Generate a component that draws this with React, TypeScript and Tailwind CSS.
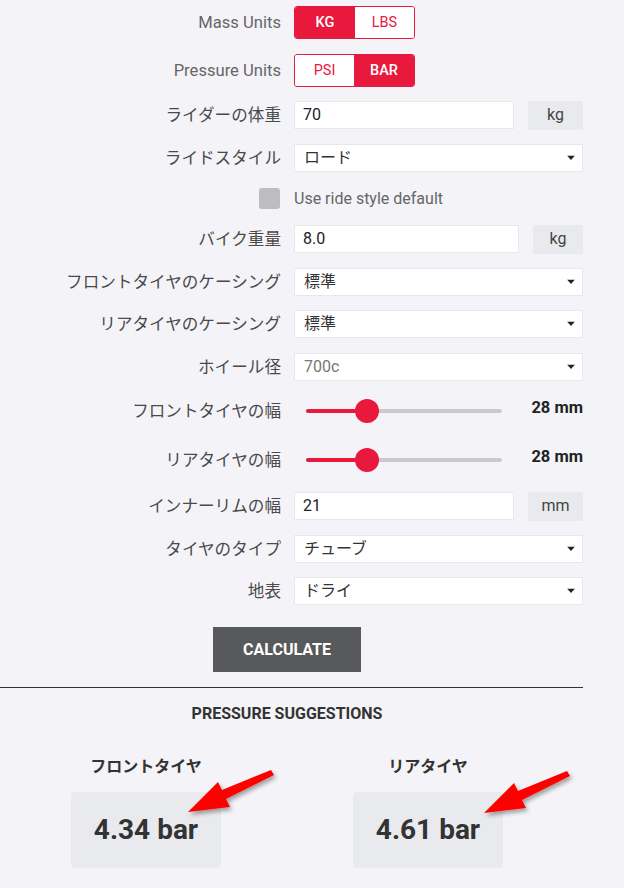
import React from "react";

const Caret = () => (
  <svg width="8" height="5" viewBox="0 0 8 5" className="absolute right-[7px] top-1/2 -translate-y-1/2">
    <path d="M0 0 L8 0 L4 4.5 Z" fill="#222" />
  </svg>
);

function Label({ children }: { children: React.ReactNode }) {
  return <div className="w-[281px] shrink-0 text-right text-[16.6px] text-[#4a4a4a] leading-none pt-[2px]">{children}</div>;
}

function Select({ value, muted }: { value: string; muted?: boolean }) {
  return (
    <div className="relative ml-[13px] w-[289px] h-full bg-white border border-[#e8e8ec] flex items-center pl-[9px]">
      <span className={muted ? "text-[16px] text-[#777]" : "text-[16px] text-[#333]"}>{value}</span>
      <Caret />
    </div>
  );
}

function Slider({ value }: { value: string }) {
  return (
    <div className="ml-[13px] w-[289px] h-full flex items-center">
      <div className="relative ml-[12px] w-[196px] h-[4px] rounded-full bg-[#c9c9ce]">
        <div className="absolute left-0 top-0 h-[4px] w-[61px] rounded-full bg-[#e8193c]" />
        <div className="absolute left-[49px] top-1/2 -translate-y-1/2 w-[24px] h-[24px] rounded-full bg-[#e8193c]" />
      </div>
      <div className="ml-auto -mt-[6px] text-[16.5px] font-bold text-[#222]">{value}</div>
    </div>
  );
}

function Arrow() {
  return (
    <svg width="110" height="60" viewBox="0 0 110 60" className="overflow-visible">
      <defs>
        <filter id="sh" x="-20%" y="-20%" width="150%" height="160%">
          <feDropShadow dx="2" dy="3" stdDeviation="2" floodColor="#000" floodOpacity="0.35" />
        </filter>
      </defs>
      <g filter="url(#sh)">
        <path d="M83 0 L86 5 L38 29 L42 37 L0 42 L30 12 L34 20 Z" fill="#ff0000" />
      </g>
    </svg>
  );
}

export default function App() {
  return (
    <div className="min-h-[888px] w-[624px] bg-[#f4f4f8] font-['Roboto','Noto_Sans_CJK_JP',sans-serif] text-[#333]">
      <div className="w-[583px] flex flex-col pt-[6px]">
        <div className="flex items-center h-[33px]">
          <Label><span className="text-[#666]">Mass Units</span></Label>
          <div className="ml-[13px] flex h-full border border-[#e8193c] rounded-[3px] overflow-hidden text-[14.5px] font-medium">
            <div className="w-[60px] flex items-center justify-center bg-[#e8193c] text-white">KG</div>
            <div className="w-[59px] flex items-center justify-center bg-white text-[#e8193c] font-normal">LBS</div>
          </div>
        </div>
        <div className="flex items-center h-[33px] mt-[15px]">
          <Label><span className="text-[#666]">Pressure Units</span></Label>
          <div className="ml-[13px] flex h-full border border-[#e8193c] rounded-[3px] overflow-hidden text-[14.5px] font-medium">
            <div className="w-[59px] flex items-center justify-center bg-white text-[#e8193c] font-normal">PSI</div>
            <div className="w-[60px] flex items-center justify-center bg-[#e8193c] text-white">BAR</div>
          </div>
        </div>
        <div className="flex items-center h-[28px] mt-[14px]">
          <Label>ライダーの体重</Label>
          <div className="ml-[13px] w-[220px] h-full bg-white border border-[#e8e8ec] flex items-center pl-[8px] text-[16px] text-[#222]">70</div>
          <div className="ml-[14px] w-[55px] h-[29px] bg-[#e9eaed] flex items-center justify-center text-[16px] text-[#444]">kg</div>
        </div>
        <div className="flex items-center h-[28px] mt-[15px]">
          <Label>ライドスタイル</Label>
          <Select value="ロード" />
        </div>
        <div className="flex items-center h-[21px] mt-[16px]">
          <div className="w-[281px] shrink-0 flex justify-end pr-[1px]">
            <div className="w-[21px] h-[21px] rounded-[3px] bg-[#bbbdc0]" />
          </div>
          <div className="ml-[13px] text-[16px] text-[#666]">Use ride style default</div>
        </div>
        <div className="flex items-center h-[28px] mt-[16px]">
          <Label>バイク重量</Label>
          <div className="ml-[13px] w-[225px] h-full bg-white border border-[#e8e8ec] flex items-center pl-[8px] text-[16px] text-[#222]">8.0</div>
          <div className="ml-[14px] w-[50px] h-[29px] bg-[#e9eaed] flex items-center justify-center text-[16px] text-[#444]">kg</div>
        </div>
        <div className="flex items-center h-[28px] mt-[15px]">
          <Label>フロントタイヤのケーシング</Label>
          <Select value="標準" />
        </div>
        <div className="flex items-center h-[28px] mt-[14px]">
          <Label>リアタイヤのケーシング</Label>
          <Select value="標準" />
        </div>
        <div className="flex items-center h-[28px] mt-[15px]">
          <Label>ホイール径</Label>
          <Select value="700c" muted />
        </div>
        <div className="flex items-center h-[28px] mt-[16px]">
          <Label>フロントタイヤの幅</Label>
          <Slider value="28 mm" />
        </div>
        <div className="flex items-center h-[28px] mt-[21px]">
          <Label>リアタイヤの幅</Label>
          <Slider value="28 mm" />
        </div>
        <div className="flex items-center h-[28px] mt-[18px]">
          <Label>インナーリムの幅</Label>
          <div className="ml-[13px] w-[220px] h-full bg-white border border-[#e8e8ec] flex items-center pl-[8px] text-[16px] text-[#222]">21</div>
          <div className="ml-[14px] w-[55px] h-[29px] bg-[#e9eaed] flex items-center justify-center text-[16px] text-[#444]">mm</div>
        </div>
        <div className="flex items-center h-[28px] mt-[15px]">
          <Label>タイヤのタイプ</Label>
          <Select value="チューブ" />
        </div>
        <div className="flex items-center h-[28px] mt-[14px]">
          <Label>地表</Label>
          <Select value="ドライ" />
        </div>
        <div className="flex justify-center mt-[22px] pr-[9px]">
          <div className="w-[148px] h-[45px] bg-[#58595b] flex items-center justify-center text-white font-bold text-[16px]">CALCULATE</div>
        </div>
        <div className="mt-[15px] h-px bg-[#333]" />
        <div className="mt-[18px] text-center pr-[9px] text-[16px] font-bold text-[#333] uppercase leading-none">Pressure Suggestions</div>
        <div className="relative mt-[37px] pl-[5px] grid grid-cols-[282px_282px]">
          <div className="flex flex-col items-center">
            <div className="text-[16px] font-bold text-[#333] leading-none">フロントタイヤ</div>
            <div className="mt-[17px] w-[150px] h-[76px] rounded-[4px] bg-[#e9eaed] flex items-center justify-center text-[28px] font-bold text-[#333]">4.34 bar</div>
          </div>
          <div className="flex flex-col items-center">
            <div className="text-[16px] font-bold text-[#333] leading-none">リアタイヤ</div>
            <div className="mt-[17px] w-[150px] h-[76px] rounded-[4px] bg-[#e9eaed] flex items-center justify-center text-[28px] font-bold text-[#333]">4.61 bar</div>
          </div>
          <div className="absolute left-[188px] top-[11px]"><Arrow /></div>
          <div className="absolute left-[484px] top-[12px]"><Arrow /></div>
        </div>
      </div>
    </div>
  );
}
